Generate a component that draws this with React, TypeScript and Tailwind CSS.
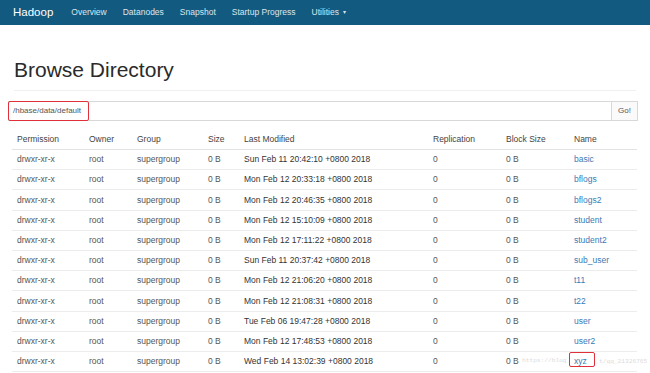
import React from "react";

const NAV = ["Overview", "Datanodes", "Snapshot", "Startup Progress"];

const ROWS: [string, string][] = [
  ["Sun Feb 11 20:42:10 +0800 2018", "basic"],
  ["Mon Feb 12 20:33:18 +0800 2018", "bflogs"],
  ["Mon Feb 12 20:46:35 +0800 2018", "bflogs2"],
  ["Mon Feb 12 15:10:09 +0800 2018", "student"],
  ["Mon Feb 12 17:11:22 +0800 2018", "student2"],
  ["Sun Feb 11 20:37:42 +0800 2018", "sub_user"],
  ["Mon Feb 12 21:06:20 +0800 2018", "t11"],
  ["Mon Feb 12 21:08:31 +0800 2018", "t22"],
  ["Tue Feb 06 19:47:28 +0800 2018", "user"],
  ["Mon Feb 12 17:48:53 +0800 2018", "user2"],
  ["Wed Feb 14 13:02:39 +0800 2018", "xyz"],
];

const COLS = "grid grid-cols-[72px_48px_71px_36px_189px_73px_68px_1fr]";

export default function App() {
  return (
    <div className="w-[650px] h-[373px] overflow-hidden bg-white text-[#333] font-['Liberation_Sans',Arial,sans-serif]">
      <nav className="h-[25px] bg-[#135a80] flex items-center px-[13px] text-white">
        <span className="text-[11.5px] mr-[18px]">Hadoop</span>
        <div className="flex items-center gap-[16px] text-[8.5px] text-[#dbe6ed]">
          {NAV.map((n) => (
            <span key={n}>{n}</span>
          ))}
          <span className="flex items-center gap-[4px]">
            Utilities <span className="text-[6px]">▾</span>
          </span>
        </div>
      </nav>

      <div className="px-[8px]">
        <div className="mx-[6px] pt-[33px] pb-[8px] border-b border-[#f0f0f0]">
          <h1 className="text-[21px] leading-[24px] font-medium text-[#2a2a2a]">Browse Directory</h1>
        </div>

        <div className="mt-[10px] flex h-[20px] w-[630px]">
          <div className="relative flex-1 border border-[#d8d8d8] flex items-center pl-[4px] text-[8px] text-[#555]">
            /hbase/data/default
            <div className="absolute left-[-1px] top-[-1px] w-[81px] h-[20px] border-[1.5px] border-[#e0303a] rounded-[2px]" />
          </div>
          <div className="w-[26px] border border-l-0 border-[#d8d8d8] flex items-center justify-center text-[8px] text-[#555] bg-[#fafafa]">
            Go!
          </div>
        </div>

        <div className="mx-[4px] mt-[9px] w-[625px] text-[8.5px]">
          <div className={`${COLS} h-[20px] items-center border-b border-[#e2e2e2] text-[#444]`}>
            {["Permission", "Owner", "Group", "Size", "Last Modified", "Replication", "Block Size", "Name"].map((h) => (
              <div key={h} className="px-[5px]">{h}</div>
            ))}
          </div>
          {ROWS.map(([date, name]) => (
            <div key={name} className={`${COLS} h-[20.2px] items-center border-b border-[#ececec] text-[#555]`}>
              <div className="px-[5px]">drwxr-xr-x</div>
              <div className="px-[5px]">root</div>
              <div className="px-[5px]">supergroup</div>
              <div className="px-[5px]">0 B</div>
              <div className="px-[5px] text-[#333]">{date}</div>
              <div className="px-[5px]">0</div>
              <div className="px-[5px] relative">
                0 B
                {name === "xyz" && (
                  <span className="absolute left-[21px] top-[1px] whitespace-nowrap text-[6.2px] text-[#dcdcdc] font-['Liberation_Mono',monospace]">
                    https://blog
                  </span>
                )}
              </div>
              <div className="px-[5px] text-[#3a7ab5]">
                {name === "xyz" ? (
                  <span className="relative">
                    xyz
                    <span className="absolute left-[-5px] top-[-4px] w-[26px] h-[15px] border-[1.5px] border-[#e0303a] rounded-[2px]" />
                    <span className="absolute left-[25px] top-[1px] whitespace-nowrap text-[6.2px] text-[#dcdcdc] font-['Liberation_Mono',monospace]">
                      t/qq_21326765
                    </span>
                  </span>
                ) : (
                  name
                )}
              </div>
            </div>
          ))}
        </div>
      </div>
    </div>
  );
}
